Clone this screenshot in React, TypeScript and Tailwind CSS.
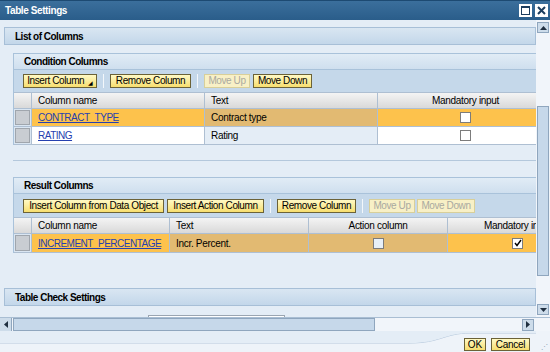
import React from "react";

const font = { fontFamily: '"Liberation Sans", Arial, sans-serif' };

const Btn = ({ label, w, disabled, arrow }: { label: string; w: number; disabled?: boolean; arrow?: boolean }) => (
  <div
    style={{ width: w }}
    className={
      "h-[14px] flex items-center justify-center whitespace-nowrap text-[10px] tracking-[-0.4px] leading-none border " +
      (disabled
        ? "border-[#d8cf9a] bg-[#f8f0c6] text-[#a9a9a0]"
        : "border-[#6b6238] bg-gradient-to-b from-[#fff9c4] to-[#f7de6d] text-black")
    }
  >
    {label}
    {arrow && <span className="ml-[4px] text-[6px] mt-[3px]">◢</span>}
  </div>
);

const Sep = () => <div className="w-px h-[14px] bg-[#f3f7fb] mx-[6px]" />;

const Check = ({ checked, bg = "bg-white" }: { checked?: boolean; bg?: string }) => (
  <div className={"w-[11px] h-[11px] border border-[#7c7c7c] flex items-center justify-center " + bg}>
    {checked && (
      <svg width="8" height="8" viewBox="0 0 8 8">
        <path d="M1 4 L3 6.5 L7 1" stroke="#000" strokeWidth="1.4" fill="none" />
      </svg>
    )}
  </div>
);

const HeadCell = ({ w, children, center }: { w: number; children?: React.ReactNode; center?: boolean }) => (
  <div
    style={{ width: w }}
    className={
      "shrink-0 h-full border-r border-[#aebfd2] bg-gradient-to-b from-[#f4f4f4] to-[#d9d9d9] flex items-center whitespace-nowrap text-[10px] tracking-[-0.3px] " +
      (center ? "justify-center" : "pl-[6px]")
    }
  >
    {children}
  </div>
);

const Cell = ({ w, bg, children, center }: { w: number; bg: string; children?: React.ReactNode; center?: boolean }) => (
  <div
    style={{ width: w }}
    className={
      "shrink-0 h-full border-r border-[#aebfd2] flex items-center whitespace-nowrap text-[10px] tracking-[-0.3px] " +
      bg +
      (center ? " justify-center" : " pl-[6px]")
    }
  >
    {children}
  </div>
);

const Selector = () => (
  <div className="w-[18px] shrink-0 h-full border-r border-[#aebfd2] p-[1px]">
    <div className="w-full h-full bg-[#c9cdd2] border border-[#a0a6ad]" />
  </div>
);

const Link = ({ children }: { children: React.ReactNode }) => (
  <span className="text-[#2540b0] underline tracking-[-0.5px]">{children}</span>
);

const PanelHead = ({ title }: { title: string }) => (
  <div className="h-[16px] bg-gradient-to-b from-[#e1ecf6] to-[#cfdfee] border-b border-[#a9c2da] flex items-center pl-[10px] text-[10px] font-bold tracking-[-0.5px]">
    {title}
  </div>
);

const Bar = ({ title }: { title: string }) => (
  <div className="ml-[4px] h-[18px] bg-gradient-to-b from-[#d9e6f2] to-[#c3d7ea] border border-[#a7bfd7] flex items-center pl-[10px] text-[10px] font-bold tracking-[-0.5px]">
    {title}
  </div>
);

export default function App() {
  return (
    <div style={font} className="w-[550px] h-[352px] flex flex-col bg-[#e4edf6] text-black overflow-hidden">
      {/* title bar */}
      <div className="h-[20px] shrink-0 bg-gradient-to-b from-[#3b6f9c] to-[#2a5d8a] border-t border-[#1d4a72] flex items-center justify-between pl-[5px] pr-[2px]">
        <span className="text-white text-[10px] font-bold tracking-[-0.4px]">Table Settings</span>
        <div className="flex gap-[3px]">
          <div className="w-[13px] h-[13px] bg-white flex items-center justify-center">
            <div className="w-[9px] h-[9px] border border-[#1c3d5e] border-t-2" />
          </div>
          <div className="w-[13px] h-[13px] bg-white flex items-center justify-center">
            <svg width="9" height="9" viewBox="0 0 9 9">
              <path d="M1 1 L8 8 M8 1 L1 8" stroke="#1c3d5e" strokeWidth="2" />
            </svg>
          </div>
        </div>
      </div>

      {/* body */}
      <div className="h-[297px] shrink-0 flex">
        <div className="w-[536px] shrink-0 overflow-hidden pt-[7px]">
          <Bar title="List of Columns" />

          {/* Condition columns */}
          <div className="ml-[13px] mt-[8px] border-l border-t border-[#a9c2da] bg-[#dae6f2]">
            <PanelHead title="Condition Columns" />
            <div className="h-[22px] bg-[#c5d8ea] flex items-center pl-[9px]">
              <Btn label="Insert Column" w={74} arrow />
              <Sep />
              <Btn label="Remove Column" w={81} />
              <Sep />
              <Btn label="Move Up" w={46} disabled />
              <div className="w-[3px]" />
              <Btn label="Move Down" w={59} />
            </div>
            <div className="border-t border-[#aebfd2]">
              <div className="h-[16px] flex border-b border-[#aebfd2]">
                <HeadCell w={18} />
                <HeadCell w={173}>Column name</HeadCell>
                <HeadCell w={173}>Text</HeadCell>
                <HeadCell w={176} center>Mandatory input</HeadCell>
              </div>
              <div className="h-[18px] flex border-b border-[#aebfd2]">
                <Selector />
                <Cell w={173} bg="bg-[#fdc24c]"><Link>CONTRACT_TYPE</Link></Cell>
                <Cell w={173} bg="bg-[#e2ba72]">Contract type</Cell>
                <Cell w={176} bg="bg-[#fdc24c]" center><Check /></Cell>
              </div>
              <div className="h-[18px] flex border-b border-[#aebfd2]">
                <Selector />
                <Cell w={173} bg="bg-white"><Link>RATING</Link></Cell>
                <Cell w={173} bg="bg-[#e4edf6]">Rating</Cell>
                <Cell w={176} bg="bg-white" center><Check /></Cell>
              </div>
            </div>
          </div>

          <div className="ml-[13px] mt-[15px] h-px bg-[#b4c8dc]" />

          {/* Result columns */}
          <div className="ml-[13px] mt-[16px] border-l border-t border-[#a9c2da] bg-[#dae6f2]">
            <PanelHead title="Result Columns" />
            <div className="h-[23px] bg-[#c5d8ea] flex items-center pl-[9px]">
              <Btn label="Insert Column from Data Object" w={141} />
              <div className="w-[3px]" />
              <Btn label="Insert Action Column" w={97} />
              <Sep />
              <Btn label="Remove Column" w={79} />
              <Sep />
              <Btn label="Move Up" w={46} disabled />
              <div className="w-[2px]" />
              <Btn label="Move Down" w={58} disabled />
            </div>
            <div className="border-t border-[#aebfd2]">
              <div className="h-[16px] flex border-b border-[#aebfd2]">
                <HeadCell w={18} />
                <HeadCell w={138}>Column name</HeadCell>
                <HeadCell w={139}>Text</HeadCell>
                <HeadCell w={139} center>Action column</HeadCell>
                <HeadCell w={140} center>Mandatory input</HeadCell>
              </div>
              <div className="h-[19px] flex border-b border-[#aebfd2]">
                <Selector />
                <Cell w={138} bg="bg-[#fdc24c]"><Link>INCREMENT_PERCENTAGE</Link></Cell>
                <Cell w={139} bg="bg-[#e2ba72]">Incr. Percent.</Cell>
                <Cell w={139} bg="bg-[#e2ba72]" center><Check bg="bg-[#e8f0f8]" /></Cell>
                <Cell w={140} bg="bg-[#fdc24c]" center><Check checked /></Cell>
              </div>
            </div>
          </div>

          <div className="mt-[35px]">
            <Bar title="Table Check Settings" />
          </div>
          <div className="ml-[148px] mt-[9px] w-[137px] h-[6px] bg-white border border-[#9aa5b1]" />
        </div>

        {/* vertical scrollbar */}
        <div className="w-[14px] shrink-0 bg-[#f1f5fa] flex flex-col items-center pt-[2px] pb-[2px]">
          <div className="w-[12px] h-[11px] bg-[#cddcea] border border-[#8fa6be] flex items-center justify-center">
            <svg width="7" height="4" viewBox="0 0 7 4"><path d="M0 4 L3.5 0 L7 4 Z" fill="#1f2f40" /></svg>
          </div>
          <div className="h-[73px]" />
          <div className="w-[12px] h-[170px] bg-[#c6d8ea] border border-[#8fa6be]" />
          <div className="flex-1" />
          <div className="w-[12px] h-[11px] bg-[#cddcea] border border-[#8fa6be] flex items-center justify-center">
            <svg width="7" height="4" viewBox="0 0 7 4"><path d="M0 0 L3.5 4 L7 0 Z" fill="#1f2f40" /></svg>
          </div>
        </div>
      </div>

      {/* horizontal scrollbar */}
      <div className="h-[14px] shrink-0 flex items-center bg-[#f1f5fa] border-t border-[#a9bed3]">
        <div className="w-[12px] h-[13px] bg-[#cddcea] border-r border-[#8fa6be] flex items-center justify-center">
          <svg width="4" height="7" viewBox="0 0 4 7"><path d="M4 0 L0 3.5 L4 7 Z" fill="#1f2f40" /></svg>
        </div>
        <div className="ml-[1px] w-[362px] h-[13px] bg-[#c6d8ea] border border-[#8fa6be]" />
        <div className="flex-1" />
        <div className="w-[12px] h-[12px] bg-[#cddcea] border border-[#8fa6be] flex items-center justify-center">
          <svg width="4" height="7" viewBox="0 0 4 7"><path d="M0 0 L4 3.5 L0 7 Z" fill="#1f2f40" /></svg>
        </div>
        <div className="w-[16px]" />
      </div>

      {/* footer */}
      <div className="relative flex-1 bg-[#eef3f9] flex items-center justify-end pr-[20px] gap-[5px]">
        <svg className="absolute left-0 top-0" width="550" height="21" viewBox="0 0 550 21">
          <path d="M0 12 L410 12 C440 12 445 2 470 2 L536 2" stroke="#b5c8dc" strokeWidth="1" fill="none" />
          <path d="M0 12 L410 12 C440 12 445 2 470 2 L536 2 L536 -1 L0 -1 Z" fill="#e4edf6" />
        </svg>
        <div className="relative mt-[5px] flex gap-[5px]">
          <div className="w-[22px] h-[13px] border border-[#6b6238] bg-gradient-to-b from-[#fff9c4] to-[#f7de6d] text-[10px] flex items-center justify-center">OK</div>
          <div className="w-[39px] h-[13px] border border-[#6b6238] bg-gradient-to-b from-[#fff9c4] to-[#f7de6d] text-[10px] tracking-[-0.3px] flex items-center justify-center">Cancel</div>
        </div>
        <div className="absolute right-[2px] bottom-[2px] text-[7px] leading-none text-[#8da0b4]">⋰</div>
      </div>
    </div>
  );
}
